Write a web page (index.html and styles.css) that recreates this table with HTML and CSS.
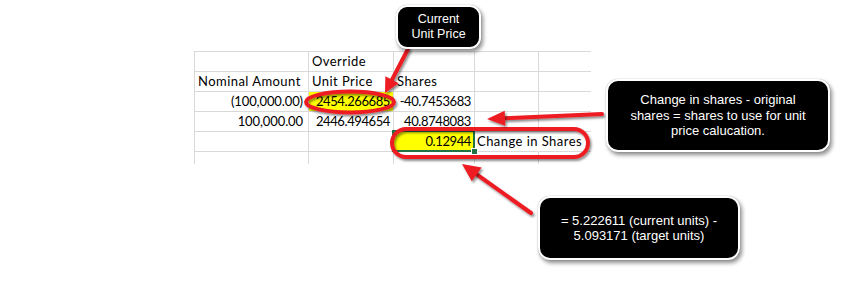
FILE: index.html
```html
<!DOCTYPE html>
<html>
<head>
<meta charset="utf-8">
<link rel="stylesheet" href="styles.css">
</head>
<body>
<div class="page">
  <div class="sheet">
    <div class="c"></div><div class="c txt">Override</div><div class="c"></div><div class="c"></div><div class="c last"></div>
    <div class="c txt">Nominal Amount</div><div class="c txt">Unit Price</div><div class="c txt">Shares</div><div class="c"></div><div class="c last"></div>
    <div class="c num acct">(100,000.00)</div><div class="c num hl">2454.266685</div><div class="c num">-40.7453683</div><div class="c"></div><div class="c last"></div>
    <div class="c num acct">100,000.00</div><div class="c num">2446.494654</div><div class="c num">40.8748083</div><div class="c"></div><div class="c last"></div>
    <div class="c"></div><div class="c"></div><div class="c num hl sel">0.12944</div><div class="c txt spill">Change in Shares</div><div class="c last"></div>
    <div class="c end"></div><div class="c end"></div><div class="c end"></div><div class="c end"></div><div class="c end last"></div>
  </div>

  <svg class="marks" width="855" height="287" viewBox="0 0 855 287">
    <defs>
      <filter id="sh" x="-20%" y="-20%" width="140%" height="160%">
        <feDropShadow dx="1.5" dy="2" stdDeviation="1.2" flood-color="#000" flood-opacity="0.45"/>
      </filter>
    </defs>
    <g filter="url(#sh)" stroke="#ec1c24" fill="none" stroke-width="4" stroke-linecap="round">
      <ellipse cx="350" cy="102" rx="44" ry="10.5"/>
      <rect x="392" y="129" width="196" height="28" rx="14" ry="14"/>
      <line x1="408" y1="49" x2="392" y2="79.7"/>
      <line x1="602" y1="114" x2="505" y2="118.2"/>
      <line x1="531" y1="213" x2="476.7" y2="174.4"/>
    </g>
    <g filter="url(#sh)" fill="#ec1c24">
      <polygon points="385,93 398.6,83.2 385.4,76.3"/>
      <polygon points="487,119 504.7,110.7 505.3,125.7"/>
      <polygon points="462,164 481.6,167.5 471.8,181.3"/>
    </g>
  </svg>

  <div class="callout co1">Current<br>Unit Price</div>
  <div class="callout co2">Change in shares - original<br>shares = shares to use for unit<br>price calucation.</div>
  <div class="callout co3">= 5.222611 (current units) -<br>5.093171 (target units)</div>
</div>
</body>
</html>
```

FILE: styles.css
```css
html, body {
  margin: 0;
  padding: 0;
  background: #fff;
}

.page {
  position: relative;
  width: 855px;
  height: 287px;
  box-sizing: border-box;
  padding: 51px 0 0 194px;
  overflow: hidden;
}

.sheet {
  display: grid;
  grid-template-columns: 114px 85px 81px 64px 52px;
  grid-template-rows: 20px 20px 20px 20px 20px 12px;
  border-left: 1px solid #d9d9d9;
  border-top: 1px solid #d9d9d9;
  width: 396px;
  font-family: Lato, "Liberation Sans", sans-serif;
  font-size: 13px;
  color: #000;
}

.c {
  box-sizing: border-box;
  border-right: 1px solid #d9d9d9;
  border-bottom: 1px solid #d9d9d9;
  line-height: 19px;
  padding: 0 3px;
  white-space: nowrap;
  overflow: hidden;
}

.c.last {
  border-right: none;
}

.c.end {
  border-bottom: none;
}

.txt {
  text-align: left;
  letter-spacing: 0.45px;
}

.num {
  text-align: right;
  letter-spacing: -0.4px;
  padding-right: 3px;
}

.num.acct {
  letter-spacing: -0.1px;
  padding-right: 5px;
}

.hl {
  background: #ffff00;
}

.spill {
  overflow: visible;
  border-right-color: transparent;
  padding-left: 2px;
}

.sel {
  position: relative;
  overflow: visible;
}

.sel::after {
  content: "";
  position: absolute;
  left: -2px;
  top: -2px;
  right: -1px;
  bottom: -1px;
  border: 2px solid #217346;
}

.sel::before {
  content: "";
  position: absolute;
  right: -4px;
  bottom: -4px;
  width: 5px;
  height: 5px;
  background: #217346;
  border: 1px solid #fff;
  z-index: 2;
}

.marks {
  position: absolute;
  left: 0;
  top: 0;
  pointer-events: none;
}

.callout {
  position: absolute;
  box-sizing: border-box;
  display: flex;
  align-items: center;
  justify-content: center;
  text-align: center;
  background: #000;
  color: #fff;
  border: 2.5px solid #fff;
  border-radius: 12px;
  box-shadow: 2px 3px 4px rgba(0, 0, 0, 0.45), 0 0 1px rgba(0, 0, 0, 0.35);
  font-family: "Liberation Sans", Arial, sans-serif;
  font-size: 13px;
  line-height: 15.5px;
}

.co1 {
  left: 396px;
  top: 5px;
  width: 85px;
  height: 44px;
  border-radius: 11px;
  font-size: 12.5px;
  line-height: 15px;
}

.co2 {
  left: 606px;
  top: 79px;
  width: 224px;
  height: 73px;
}

.co3 {
  left: 538px;
  top: 196px;
  width: 202px;
  height: 64px;
  line-height: 15px;
}
```
